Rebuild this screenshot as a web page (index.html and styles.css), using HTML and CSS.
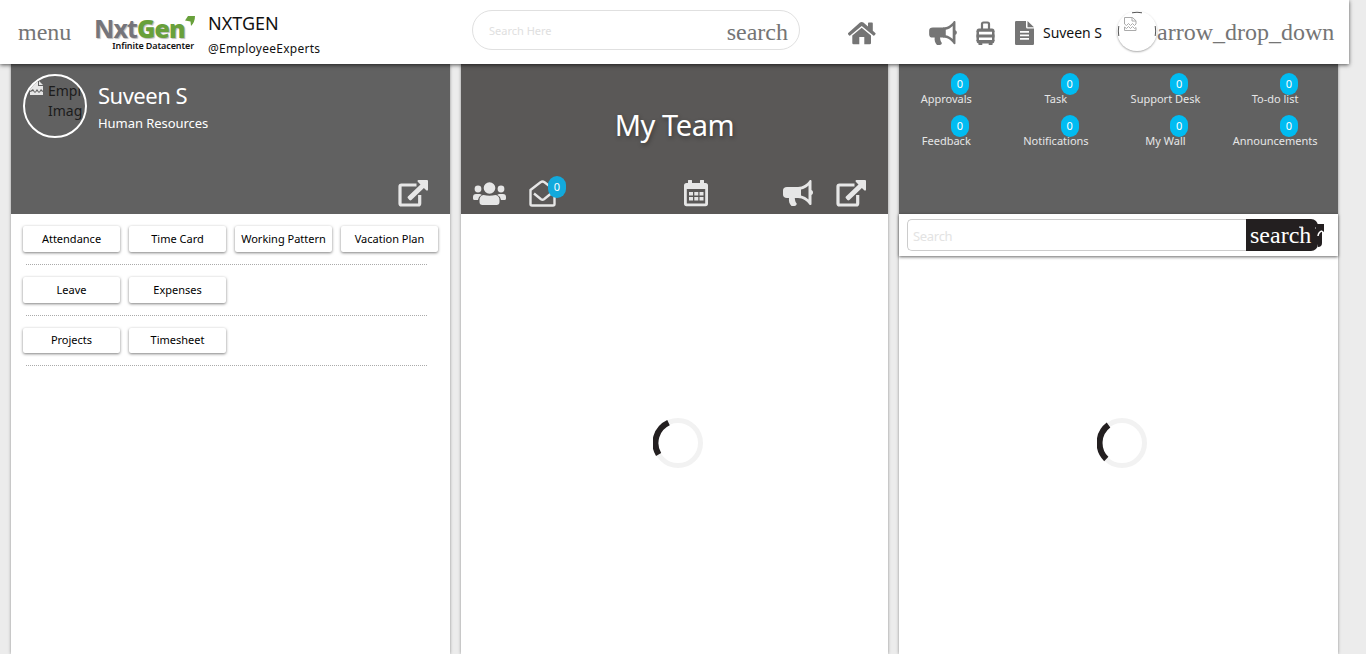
FILE: index.html
```html
<!DOCTYPE html>
<html lang="en">
<head>
<meta charset="utf-8">
<title>NXTGEN</title>
<link rel="stylesheet" href="styles.css">
</head>
<body>
<svg class="defs" width="0" height="0">
  <symbol id="bullhorn" viewBox="0 0 30 26">
    <path d="M4 7h12v11h-4.200c.2 2.600.6 4 2 5.800-.2 1.200-1 2.200-2.300 2.200H8.500C6.300 24 5.600 21 6 18H4c-2.600 0-4-1.300-4-3.500V10.500C0 8.300 1.400 7 4 7z"/>
    <path fill-rule="evenodd" d="M15 7c5 0 9-3 11.500-6.500.5-.7 2-.5 2 .6V10c2 1 2 4 0 5v9c0 1.200-1.500 1.500-2.200.5C24 21 20 18 15 18zM18 9.600v5.800c3 .7 5.500 2 7.500 4V5.500c-2 2-4.500 3.500-7.500 4.100z"/>
  </symbol>
  <symbol id="external" viewBox="0 0 30 27">
    <path class="line" d="M18.500 5H3.500Q2 5 2 6.500v17Q2 25 3.500 25h16.700q1.500 0 1.500-1.500V15"/>
    <path d="M20.500 0H29q1 0 1 1v8.500c0 1.200-1 1.500-1.800.8l-2.300-2.300-12.500 12q-1 .8-2 0l-1.500-1.700q-.8-.9 0-1.800L22.500 4.500 20 2c-.9-.9-.5-2 .5-2z"/>
  </symbol>
</svg>
<header class="topbar">
  <span class="mi menu">menu</span>
  <div class="logo">
    <div class="logo-name"><span>Nxt</span><b>Gen</b></div>
    <svg class="logo-mark" width="10" height="11" viewBox="0 0 10 11"><path d="M3 0h7Q10 6 6 10L5.500 5.500 0 4.500z"/></svg>
    <div class="logo-sub">Infinite Datacenter</div>
  </div>
  <div class="brand"><div class="brand-name">NXTGEN</div><div class="brand-tag">@EmployeeExperts</div></div>
  <div class="global-search"><span class="hint">Search Here</span><span class="mi">search</span></div>
  <svg class="icon home" width="28" height="23" viewBox="0 0 28 23"><path d="M13.700 0q1 0 1.700.6L20 4.600V1.400q0-.8.8-.8H24q.8 0 .8.800v7.400l2.500 2.200q.6.6.1 1.300l-.8 1q-.6.6-1.300.1L13.700 4 2.200 13.400q-.7.500-1.300-.1l-.8-1q-.5-.7.1-1.300L12 .6Q12.700 0 13.700 0z"/><path d="M13.700 5.800 23 13.400V21q0 1.200-1.200 1.200h-5.500V15h-5v7.200H5.500Q4.300 22.200 4.300 21v-7.600z"/></svg>
  <svg class="icon horn" width="28" height="24"><use href="#bullhorn" width="28" height="24"/></svg>
  <svg class="icon case" width="19" height="25" viewBox="0 0 19 25"><path class="line" d="M6 8V3q0-1.500 1.500-1.500h4Q13 1.500 13 3v5"/><path d="M3 7.500h13q2.500 0 2.500 2.500v.8H.5V10Q.5 7.500 3 7.500zM.5 13.400h18v3.200H.5zM.5 19h18v1q0 2-2 2.500V24h-3.800v-1.500H6.300V24H2.500v-1.500q-2-.5-2-2.500z"/><path d="M.5 10h2.500v10H.5zM16 10h2.500v10H16z"/></svg>
  <svg class="icon file" width="19" height="24" viewBox="0 0 19 24"><path fill-rule="evenodd" d="M1.200 0H11v6q0 1.500 1.500 1.500H19v15.300q0 1.200-1.200 1.200H1.200Q0 24 0 22.800V1.200Q0 0 1.200 0zM5 10v1.700h9V10zm0 3.600v1.700h9v-1.700zm0 3.400v1.700h9V17z"/><path d="M12.500 0 19 6.200H12.500z"/></svg>
  <span class="user">Suveen S</span>
  <div class="avatar"><svg width="40" height="40" viewBox="0 0 40 40"><path class="arc" d="M15 1.800Q20 .7 25 1.800M1.800 15Q.8 20 1.800 25M38.200 15Q39.200 20 38.200 25"/><path class="broken" d="M7.500 13V6.500h8l3.500 3.300V13l-1.500 1.500-2-2-2 2-2-2-2 2zM15 6.500v3.500h4M7.500 19.500V16l2 1.500 2-2 2 2 2-2 2 2 1.500-1v3z"/></svg></div>
  <span class="mi">arrow_drop_down</span>
</header>
<main class="columns">
  <section class="card">
    <div class="hero me">
      <div class="profile">
        <div class="photo">
          <svg width="13" height="14" viewBox="0 0 13 14"><path d="M0 0h8v5h5v5l-2-2-2 3-2-3-2 3-2-3-3 2zM9 0l4 4H9zM0 14v-3l3-1 2 2 2-2 2 2 2-2 2 1v3z"/></svg>
          <span>Empl<br>Imag</span>
        </div>
        <div class="who"><div class="who-name">Suveen S</div><div class="who-dept">Human Resources</div></div>
      </div>
      <svg class="light ext" width="30" height="27"><use href="#external"/></svg>
    </div>
    <div class="actions">
      <div class="action-row"><a>Attendance</a><a>Time Card</a><a>Working Pattern</a><a>Vacation Plan</a></div>
      <div class="action-row"><a>Leave</a><a>Expenses</a></div>
      <div class="action-row third"><a>Projects</a><a>Timesheet</a></div>
    </div>
  </section>
  <section class="card team">
    <div class="hero">
      <h1>My Team</h1>
      <div class="team-tools">
        <svg class="light users" width="33" height="24" viewBox="0 0 33 24"><circle cx="16.500" cy="6" r="5.800"/><circle cx="5" cy="7" r="3.400"/><circle cx="28" cy="7" r="3.400"/><path d="M10.500 13q6 1.500 12 0 4 .8 4 5v2q0 3-3 3h-14q-3 0-3-3v-2q0-4.200 4-5zM3 12h4l1.700.8Q5.500 14.500 5 18H1.500Q0 18 0 16.500V15q0-3 3-3zM30 12h-4l-1.700.8q3.200 1.700 3.700 5.200h3.500q1.500 0 1.500-1.500V15q0-3-3-3z"/></svg>
        <div class="mail"><svg class="light" width="27" height="27" viewBox="0 0 27 27"><path class="mail-line" d="M1.500 10 11.500 2.200q2-1.300 4 0l10 7.800v14q0 1.500-1.500 1.500H3q-1.500 0-1.500-1.500zM5 13.500l7 5.700q1.500 1 3 0l7-5.700"/></svg><span class="badge">0</span></div>
        <svg class="light cal" width="24" height="27" viewBox="0 0 24 27"><path fill-rule="evenodd" d="M4.500 0h3q.5 0 .5.500V3h8V.5q0-.5.500-.5h3q.5 0 .5.500V3h1.500Q24 3 24 5.500v18q0 2.800-2.500 2.800h-19Q0 26.300 0 23.500v-18Q0 3 2.500 3H4V.5Q4 0 4.500 0zM2.800 9v14.500h18.400V9zM5 12h4v3.500H5zm5.300 0h4v3.500h-4zm5.200 0h4v3.500h-4zM5 17h4v3.500H5zm5.300 0h4v3.500h-4zm5.200 0h4v3.500h-4z"/></svg>
        <svg class="light" width="30" height="26"><use href="#bullhorn"/></svg>
        <svg class="light" width="30" height="27"><use href="#external"/></svg>
      </div>
    </div>
    <div class="loading"><svg width="50" height="50" viewBox="0 0 50 50"><circle cx="25" cy="25" r="22.500"/><path d="M5.600 36.500A22.500 22.500 0 0 1 15.500 4.600"/></svg></div>
  </section>
  <section class="card">
    <div class="hero counts">
      <div class="count"><span class="badge">0</span>Approvals</div>
      <div class="count"><span class="badge">0</span>Task</div>
      <div class="count"><span class="badge">0</span>Support Desk</div>
      <div class="count"><span class="badge">0</span>To-do list</div>
      <div class="count"><span class="badge">0</span>Feedback</div>
      <div class="count"><span class="badge">0</span>Notifications</div>
      <div class="count"><span class="badge">0</span>My Wall</div>
      <div class="count"><span class="badge">0</span>Announcements</div>
    </div>
    <div class="wall-search">
      <div class="field">Search</div>
      <div class="go mi">search<svg class="go-icon" width="26" height="28" viewBox="0 0 26 28"><path d="M18 0h8v8l-2-1.500V19q0 4-4 4V9z"/><path class="edge" d="M20 12Q20.500 8 24 7"/><path class="speck" d="M1 3h4M17 4h1"/></svg></div>
    </div>
    <div class="loading feed"><svg width="50" height="50" viewBox="0 0 50 50"><circle cx="25" cy="25" r="22.500"/><path d="M9.300 41A22.500 22.500 0 0 1 11.500 7"/></svg></div>
  </section>
</main>
</body>
</html>
```
FILE: styles.css
```css
* { box-sizing: border-box; }
body { margin: 0; height: 654px; overflow: hidden; background: #ececec; font-family: "Noto Sans", "Open Sans", sans-serif; color: #111; }
.defs { position: absolute; }
svg { display: block; flex: none; }
.mi { font-family: "Liberation Serif", serif; font-size: 24px; line-height: 24px; color: #757575; white-space: nowrap; }
.line { fill: none; stroke: currentColor; stroke-width: 3.2; }

.topbar { position: relative; z-index: 2; display: flex; align-items: flex-start; width: 1349px; height: 64px; padding: 20px 0 0 18px; background: #fff; box-shadow: 0 1px 4px rgba(0,0,0,.65); white-space: nowrap; }
.menu { width: 76px; }
.logo { position: relative; width: 114px; height: 40px; margin-top: -4px; }
.logo-name { font: bold 25px/24px "Noto Sans", sans-serif; letter-spacing: -.9px; color: #75757b; text-shadow: 1px 1px 1px #bbb; }
.logo-name b { color: #68a03b; }
.logo-mark { position: absolute; left: 91px; top: 0; fill: #68a03b; }
.logo-sub { width: 100px; font: 600 9px/12px "Noto Sans", sans-serif; letter-spacing: -.1px; text-align: right; color: #111; }
.brand { width: 264px; margin-top: -10px; }
.brand-name { font-size: 18px; line-height: 26px; }
.brand-tag { margin-top: 4px; font-size: 12px; line-height: 18px; letter-spacing: .27px; }
.global-search { display: flex; align-items: center; justify-content: space-between; width: 328px; height: 40px; margin-top: -10px; padding: 4px 11px 0 16px; border: 1px solid #e0e0e0; border-radius: 20px; font-size: 11px; color: #e0e0e0; }
.hint { padding-bottom: 3px; }
.icon { fill: #757575; color: #757575; }
.home { margin: 2px 0 0 48px; }
.horn { margin: 1px 0 0 53px; }
.case { margin: 1px 0 0 19px; }
.case .line { stroke-width: 2.2; }
.file { margin: 1px 0 0 20px; }
.user { width: 73px; margin: 2px 0 0 9px; font-size: 14px; line-height: 22px; letter-spacing: -.05px; }
.avatar { width: 40px; height: 40px; margin: -9px 0 0 1px; border-radius: 50%; box-shadow: 0 1px 2px #aaa; }
.avatar path { fill: none; }
.arc { stroke: #555; stroke-width: 1; }
.broken { stroke: #aaa; stroke-width: 1; }

.columns { display: flex; gap: 11px; padding-left: 11px; height: 590px; }
.card { width: 439px; background: #fff; box-shadow: 0 0 3px rgba(0,0,0,.4); }
.team { width: 427px; }
.hero { height: 150px; background: #616161; color: #fff; }
.light { fill: #e6e6e6; color: #e6e6e6; }
.me { padding: 10px 12px 0; }
.profile { display: flex; height: 106px; }
.photo { display: flex; gap: 5px; width: 64px; height: 64px; overflow: hidden; padding: 5px 0 0 5px; border: 2px solid #fff; border-radius: 50%; color: #1c1c1c; font-size: 14px; line-height: 20px; }
.photo svg { fill: #e6e6e6; }
.who { margin-left: 11px; }
.who-name { font-size: 22px; line-height: 30px; margin-top: 6px; letter-spacing: -.5px; }
.who-dept { font-size: 13px; line-height: 18px; margin-top: 4px; letter-spacing: -.05px; }
.ext { margin-left: 375px; }

.actions { padding: 12px 12px 0; }
.action-row { position: relative; display: flex; gap: 9px; height: 51px; }
.action-row::after { content: ""; position: absolute; left: 3px; top: 38px; width: 401px; border-top: 1px dotted #aaa; }
.third { margin-top: -1px; }
.action-row a { width: 97px; height: 26px; border-radius: 2px; background: #fff; box-shadow: 0 1px 3px rgba(0,0,0,.5); font-size: 11px; line-height: 26px; text-align: center; white-space: nowrap; color: #000; }
.third a { margin-top: 1px; height: 25px; line-height: 24px; }

.team .hero { background: #5a5857; }
.team h1 { margin: 0; height: 116px; padding-top: 41px; font-size: 29px; line-height: 40px; font-weight: 400; letter-spacing: -.4px; text-align: center; text-shadow: 1px 2px 4px rgba(0,0,0,.35); }
.team-tools { display: flex; align-items: flex-start; padding-left: 12px; }
.users { margin-top: 2px; }
.mail { position: relative; width: 27px; margin: 0 128px 0 23px; }
.mail-line { fill: none; stroke: currentColor; stroke-width: 2.4; }
.cal { margin-right: 75px; }
.cal + svg { margin-right: 23px; }
.badge { display: block; width: 18px; height: 22px; border-radius: 9px; background: #00bcf2; color: #fff; font-size: 11px; line-height: 22px; text-align: center; }
.mail .badge { position: absolute; left: 19px; top: -4px; background: #12a9dc; }
.loading { display: flex; justify-content: center; padding: 204px 0 0 7px; }
.loading circle { fill: none; stroke: #f2f2f2; stroke-width: 5; }
.loading path { fill: none; stroke: #231f20; stroke-width: 6; }

.counts { display: grid; grid-template-columns: repeat(4, 109.600px); grid-auto-rows: 42px; padding-top: 9px; }
.count { position: relative; padding: 17px 15px 0 0; font-size: 11px; line-height: 18px; text-align: center; white-space: nowrap; color: #e6e6e6; }
.count .badge { position: absolute; left: 52px; top: 0; }
.wall-search { display: flex; height: 42px; padding: 5px 8px; box-shadow: 0 1px 3px rgba(0,0,0,.6); }
.field { width: 339px; height: 32px; padding-left: 5px; border: 1px solid #ccc; border-right: 0; border-radius: 5px 0 0 5px; font-size: 13px; line-height: 33px; letter-spacing: -.3px; color: #e3e3e3; }
.go { position: relative; width: 72px; height: 32px; padding-left: 4px; border-radius: 0 7px 7px 0; background: #231f20; color: #fff; line-height: 33px; }
.go-icon { position: absolute; left: 52px; top: 5px; fill: #231f20; }
.edge { fill: none; stroke: #fff; stroke-width: 1.5; }
.speck { stroke: #ddd; }
.feed { padding-top: 162px; }
```
